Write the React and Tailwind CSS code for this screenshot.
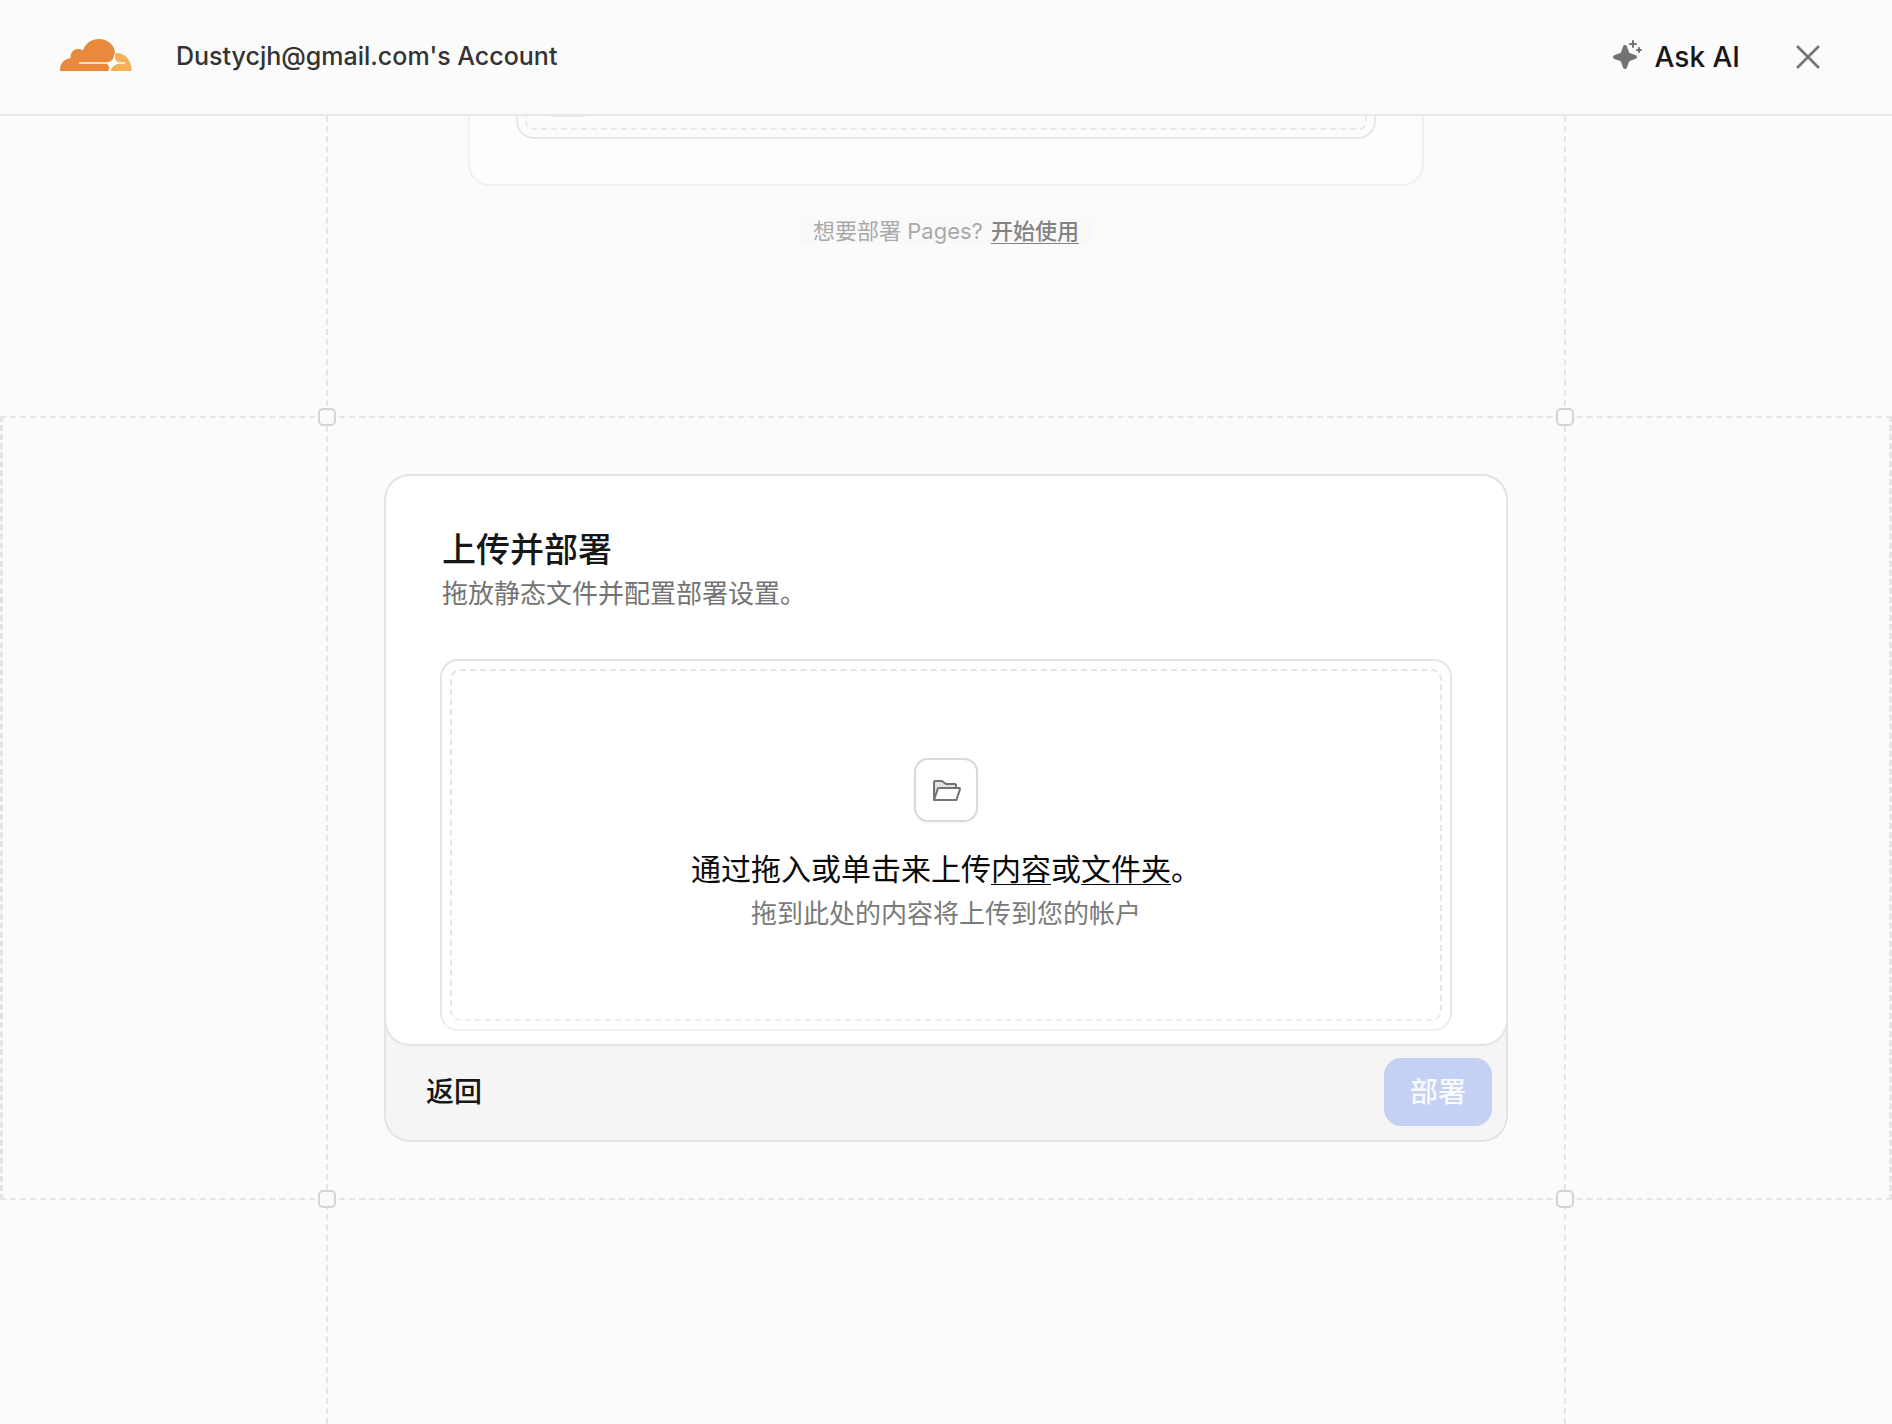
import { PiFolderOpenDuotone, PiSparkleFill, PiX } from 'react-icons/pi'

function CloudLogo() {
  return (
    <svg viewBox="0 0 72 36" className="h-9 w-[72px]" aria-hidden="true">
      <path
        fill="#e8893c"
        d="M0 32C-.4 25 4.200 19.600 10.600 19.300 10 14 13.500 10 17.800 10c2 0 3.600.5 5 1.400C25.300 4.500 31.600 0 39 0 47.600 0 54.600 6 55 13.400c-1 1.600-1.200 3-1.500 5.100-.9 2.700-2.500 4-5 4.500H20a1 1 0 0 0 0 2h26.500c2.300.3 3.300 3.500 2.200 5.500L48.200 32Z"
      />
      <path
        fill="#f3b159"
        d="M55.500 14C64.500 13.600 72 21 71.500 32H50.500c.8-2.800 2.600-5 5-6.200.8-.5 1.500-.8 2.500-.8h6a1 1 0 0 0 0-2h-5.500c-2.700-.6-4-3.500-3.600-6 .1-1 .2-2 .6-3Z"
      />
      <rect x="19" y="23" width="29" height="2" rx="1" fill="#fbe0ca" />
      <rect x="58" y="23" width="7" height="2" rx="1" fill="#fdebd0" />
    </svg>
  )
}

// Small squares where the dashed guides cross
function GridCorners() {
  return (
    <>
      <span className="absolute -top-2 -left-2.5 size-[18px] rounded-[5px] border-2 border-[#d4d4d4] bg-[#fbfbfb]" />
      <span className="absolute -top-2 -right-2.5 size-[18px] rounded-[5px] border-2 border-[#d4d4d4] bg-[#fbfbfb]" />
      <span className="absolute -bottom-2 -left-2.5 size-[18px] rounded-[5px] border-2 border-[#d4d4d4] bg-[#fbfbfb]" />
      <span className="absolute -bottom-2 -right-2.5 size-[18px] rounded-[5px] border-2 border-[#d4d4d4] bg-[#fbfbfb]" />
    </>
  )
}

function Header() {
  return (
    <header className="flex items-center justify-between border-b-2 border-[#e8e8e8] bg-[#fbfbfb] pl-[60px] pr-[66px]">
      <div className="flex h-[114px] items-center gap-11">
        <CloudLogo />
        <span className="text-[25px] font-medium text-[#333333]">Dustycjh@gmail.com's Account</span>
      </div>
      <div className="flex items-center gap-[50px]">
        <button type="button" className="flex items-center gap-3 text-[28px] font-medium text-[#171717]">
          <PiSparkleFill size={32} className="mb-1 text-[#737373]" />
          Ask AI
        </button>
        <button type="button" aria-label="Close" className="text-[#737373]">
          <PiX size={36} strokeWidth={4} />
        </button>
      </div>
    </header>
  )
}

// Tail of the previous step, scrolled up under the header
function PreviousStep() {
  return (
    <section className="mx-auto flex w-full max-w-[1240px] flex-col items-center border-x-2 border-dashed border-[#e5e5e5] pb-[172px]">
      <div className="w-full max-w-[956px] rounded-b-[22px] border-x-2 border-b-2 border-solid border-[#f1f1f1] bg-[#fdfdfd] px-[46px] pb-[45px]">
        <div className="rounded-b-[18px] border-x-2 border-b-2 border-[#e7e7e7] bg-[#fcfcfc] px-[7px] pb-[7px]">
          <div className="h-[14px] rounded-b-lg border-x-2 border-b-2 border-dashed border-[#e9e9e9] px-[23px]">
            <div className="h-px w-9 bg-[#eeeeee]" />
          </div>
        </div>
      </div>
      <p className="mt-8 flex items-center gap-2 rounded bg-[#f9f9f9] px-[14px] text-[22px] leading-[26px] text-[#a9a9a9]">
        想要部署 Pages?
        <a href="#pages" className="font-medium text-[#838383] underline decoration-1 underline-offset-4">开始使用</a>
      </p>
    </section>
  )
}

function Dropzone() {
  return (
    <div className="rounded-2xl p-2 ring-2 ring-[#e5e5e5]">
      <div className="flex h-[352px] flex-col items-center justify-center rounded-[10px] border-2 border-dashed border-[#e5e5e5] pt-1">
        <div className="flex size-16 items-center justify-center rounded-[14px] border-2 border-[#d9d9d9] text-[#737373] shadow-xs">
          <PiFolderOpenDuotone size={32} />
        </div>
        <p className="mt-6 text-[30px] leading-[46px] text-[#0a0a0a]">
          通过拖入或单击来上传
          <button type="button" className="underline decoration-1 underline-offset-4">内容</button>
          或
          <button type="button" className="underline decoration-1 underline-offset-4">文件夹</button>
          。
        </p>
        <p className="text-[26px] leading-[44px] text-[#7a7a7a]">拖到此处的内容将上传到您的帐户</p>
      </div>
    </div>
  )
}

function UploadCard() {
  return (
    <div className="rounded-3xl bg-[#f5f5f5] ring-2 ring-[#e4e4e4]">
      <div className="relative rounded-3xl bg-white px-14 pt-[52px] pb-[15px] ring-2 ring-[#e4e4e4]">
        <h1 className="text-[34px] leading-[44px] font-medium text-[#171717]">上传并部署</h1>
        <p className="mb-[45px] text-[26px] leading-[44px] text-[#737373]">拖放静态文件并配置部署设置。</p>
        <Dropzone />
        <div className="absolute inset-x-14 bottom-0 -mx-0.5 h-10 bg-gradient-to-b from-white/0 to-white/70" />
      </div>
      <div className="flex items-center justify-between p-[14px] text-[28px] font-medium">
        <button type="button" className="h-[68px] rounded-[17px] px-[26px] text-[#171717]">返回</button>
        <button type="button" disabled className="h-[68px] rounded-[17px] bg-[#c4d1f5] px-[26px] text-[#fafafa]">部署</button>
      </div>
    </div>
  )
}

export default function App() {
  return (
    <div className="flex h-screen flex-col overflow-hidden bg-[#fbfbfb] font-['Inter','Noto_Sans_CJK_SC',sans-serif]">
      <Header />
      <main className="flex flex-1 flex-col">
        <PreviousStep />
        <section className="relative z-10 border-x-3 border-y-2 border-dashed border-[#e5e5e5]">
          <div className="relative mx-auto -my-0.5 max-w-[1240px] border-x-2 border-dashed border-[#e5e5e5] px-[58px] py-15">
            <UploadCard />
            <GridCorners />
          </div>
        </section>
        <div className="mx-auto -mt-1.5 w-full max-w-[1240px] flex-1 border-x-2 border-dashed border-[#e5e5e5]" />
      </main>
    </div>
  )
}
